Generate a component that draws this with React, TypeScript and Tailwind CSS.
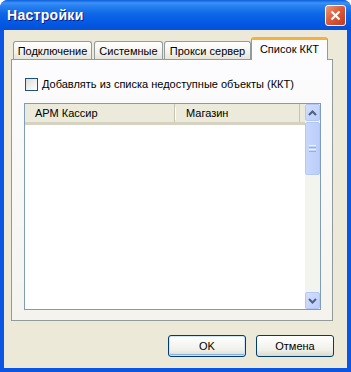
import React from 'react';

const font = "font-['Liberation_Sans',Arial,sans-serif]";

function Tab({ label, width, ml, active }: { label: string; width: string; ml: string; active?: boolean }) {
  if (active) {
    return (
      <div
        className={`relative z-10 -mb-px h-[23px] ${width} ${ml} rounded-t-[3px] border-x border-[#919B9C] border-t-[3px] border-t-[#F5B23A] bg-[#FCFCFE] text-center text-[11px] leading-[13px] pt-[3px] text-black`}
      >
        {label}
      </div>
    );
  }
  return (
    <div
      className={`h-[18px] ${width} ${ml} rounded-t-[3px] border-x border-t border-[#919B9C] bg-[linear-gradient(to_bottom,#FFFFFF,#F3F2EC_60%,#E6E4DA)] text-center text-[11px] leading-[13px] pt-[3px] text-black`}
    >
      {label}
    </div>
  );
}

function Chevron({ up }: { up?: boolean }) {
  return (
    <svg width="9" height="6" viewBox="0 0 9 6">
      <path
        d={up ? 'M1 5 L4.5 1.5 L8 5' : 'M1 1 L4.5 4.5 L8 1'}
        fill="none"
        stroke="#4D6185"
        strokeWidth="2"
      />
    </svg>
  );
}

function ScrollButton({ up }: { up?: boolean }) {
  return (
    <div className="h-[17px] w-[15px] rounded-[2px] border border-[#B4C8F6] bg-[linear-gradient(to_bottom_right,#D2DEFC,#BCCDF9)] flex items-center justify-center">
      <Chevron up={up} />
    </div>
  );
}

export default function App() {
  return (
    <div className={`${font} w-[351px] h-[372px] rounded-t-[8px] bg-[#0A55E3] flex flex-col`}>
      {/* Title bar */}
      <div className="h-[30px] rounded-t-[8px] bg-[linear-gradient(to_bottom,#0A5FDD_0%,#3F92F6_10%,#2A83F2_18%,#0E68E6_45%,#0357E2_80%,#0550D9_100%)] flex items-center pl-[7px] pr-[5px]">
        <span className="text-[14px] font-bold text-white [text-shadow:1px_1px_0_#0A1E8A] tracking-[0.3px]">Настройки</span>
        <div className="ml-auto h-[21px] w-[21px] rounded-[3px] border border-white bg-[linear-gradient(to_bottom_right,#EE9A7C,#DC5D3B_45%,#C3391B)] flex items-center justify-center">
          <svg width="11" height="11" viewBox="0 0 11 11">
            <path d="M1.5 1.5 L9.5 9.5 M9.5 1.5 L1.5 9.5" stroke="white" strokeWidth="2.2" />
          </svg>
        </div>
      </div>

      {/* Client area */}
      <div className="flex-1 mx-[4px] mb-[4px] bg-[#ECE9D8] flex flex-col">
        <div className="mt-[7px] flex items-end h-[22px]">
          <Tab label="Подключение" width="w-[79px]" ml="ml-[9px]" />
          <Tab label="Системные" width="w-[69px]" ml="ml-[2px]" />
          <Tab label="Прокси сервер" width="w-[87px]" ml="ml-[1px]" />
          <Tab label="Список ККТ" width="w-[77px]" ml="ml-0" active />
        </div>

        <div className="ml-[7px] w-[322px] h-[262px] border border-[#919B9C] bg-[linear-gradient(to_bottom,#FCFCFE,#F4F3EE)] px-[12px] pt-[18px] flex flex-col">
          <div className="flex items-center ml-px h-[13px]">
            <div className="h-[13px] w-[13px] border border-[#1C5180] bg-[linear-gradient(to_bottom_right,#DCDCD7,#FFFFFF)]" />
            <span className="ml-[4px] text-[11px] leading-[13px] text-black">Добавлять из списка недоступные объекты (ККТ)</span>
          </div>

          <div className="mt-[12px] w-[297px] h-[207px] border border-[#7F9DB9] bg-white flex">
            <div className="flex-1 flex flex-col">
              <div className="h-[21px] bg-[#EBEADB] border-b-[3px] border-[#D6D2C2] flex items-center text-[11px] leading-[13px] text-black">
                <div className="w-[150px] h-full flex items-center pl-[10px] border-r border-[#C7C5B2]">АРМ Кассир</div>
                <div className="w-[1px] h-[13px] bg-white" />
                <div className="w-[124px] h-full flex items-center pl-[10px] border-r border-[#C7C5B2]">Магазин</div>
              </div>
            </div>
            <div className="w-[15px] bg-[#F4F4EE] flex flex-col">
              <ScrollButton up />
              <div className="mt-[1px] h-[53px] w-[15px] rounded-[2px] border border-[#B4C8F6] bg-[linear-gradient(to_right,#C9D7FC,#BACDFA)] flex flex-col items-center justify-center gap-[1px]">
                <div className="h-px w-[7px] bg-[#EEF4FE]" />
                <div className="h-px w-[7px] bg-[#8CB0F8]" />
                <div className="h-px w-[7px] bg-[#EEF4FE]" />
                <div className="h-px w-[7px] bg-[#8CB0F8]" />
              </div>
              <div className="flex-1" />
              <ScrollButton />
            </div>
          </div>
        </div>

        <div className="mt-[14px] flex justify-end gap-[10px] pr-[13px]">
          <button className="h-[22px] w-[78px] rounded-[3px] border border-[#003C74] bg-[linear-gradient(to_bottom,#FFFFFF,#F0F0EA_70%,#DCD8CB)] shadow-[inset_0_0_0_1px_#CEE3FC,inset_0_-1px_0_1px_#89ADE4] text-[11px] text-black">
            OK
          </button>
          <button className="h-[22px] w-[78px] rounded-[3px] border border-[#003C74] bg-[linear-gradient(to_bottom,#FFFFFF,#F0F0EA_70%,#DCD8CB)] text-[11px] text-black">
            Отмена
          </button>
        </div>
      </div>
    </div>
  );
}
